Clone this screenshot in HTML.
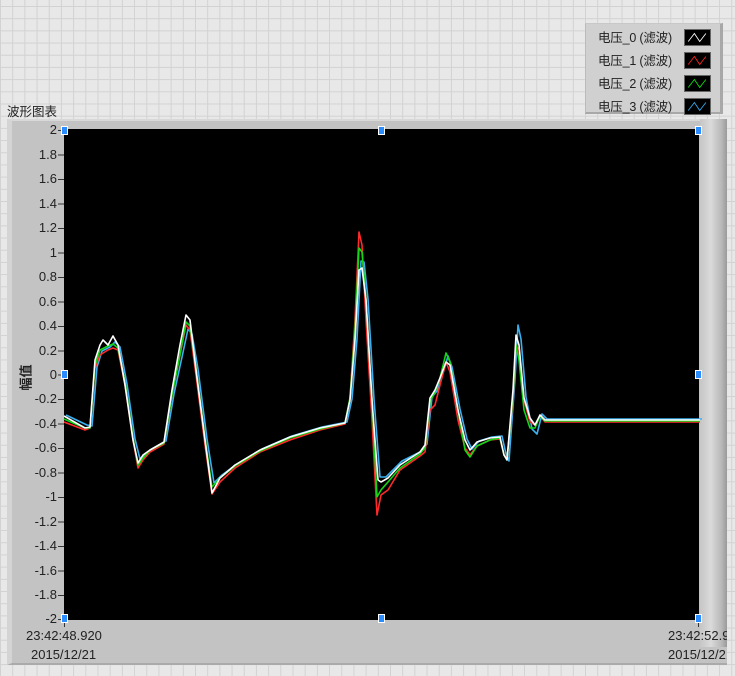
<!DOCTYPE html>
<html><head><meta charset="utf-8"><style>
*{margin:0;padding:0;box-sizing:border-box}
body{width:735px;height:676px;overflow:hidden;position:relative;font-family:"Liberation Sans","Noto Sans CJK SC",sans-serif;
background-color:#e8e8e8;
background-image:linear-gradient(#d2d2d2 1px,transparent 1px),linear-gradient(90deg,#d2d2d2 1px,transparent 1px);
background-size:12.2px 12.2px;background-position:0 6px}
.t{position:absolute;font-size:12px;color:#222;white-space:nowrap}
#legend{position:absolute;left:585px;top:23px;width:138px;height:91px;background:#d0d0d0;border-right:3px solid #a8a8a8;border-bottom:2px solid #a8a8a8;border-left:1px solid #bbb;border-top:1px solid #c8c8c8}
.li{position:absolute;left:12px;font-size:12.5px;color:#222;letter-spacing:-0.2px}
.sw{position:absolute;left:98px;width:27px;height:17px;background:#000;border:1px solid #666}
#panel{position:absolute;left:7px;top:119px;width:720px;height:546px;background:#c3c3c3;border-top:2px solid #d8d8d8;border-left:5px solid #d4d4d4;border-bottom:2px solid #aaa}
#rb{position:absolute;left:700px;top:119px;width:27px;height:528px;background:linear-gradient(90deg,#c6c6c6,#dadada 40%,#b8b8b8 80%,#9a9a9a)}
#plot{position:absolute;left:64px;top:129px;width:635px;height:491px;background:#000}
.yl{position:absolute;right:678px;font-size:13px;color:#222;text-align:right}
.h{position:absolute;width:7px;height:9px;background:#2a8cff;border:1px solid #fff}
</style></head><body>
<div id="legend">
<div class="li" style="top:3px">电压_0 (滤波)</div>
<div class="li" style="top:26px">电压_1 (滤波)</div>
<div class="li" style="top:49px">电压_2 (滤波)</div>
<div class="li" style="top:72px">电压_3 (滤波)</div>
<svg class="sw" style="top:5px" viewBox="0 0 27 17"><polyline points="3,13 10,4 16,13 23,4" fill="none" stroke="#fff"/></svg>
<svg class="sw" style="top:28px" viewBox="0 0 27 17"><polyline points="3,13 10,4 16,13 23,4" fill="none" stroke="#f22"/></svg>
<svg class="sw" style="top:51px" viewBox="0 0 27 17"><polyline points="3,13 10,4 16,13 23,4" fill="none" stroke="#1d1"/></svg>
<svg class="sw" style="top:74px" viewBox="0 0 27 17"><polyline points="3,13 10,4 16,13 23,4" fill="none" stroke="#3ae"/></svg>
</div>
<div class="t" style="left:7px;top:101px;font-size:12.5px">波形图表</div>
<div id="panel"></div>
<div id="rb"></div>
<div id="plot"></div>
<svg style="position:absolute;left:0;top:0" width="735" height="676">
<g stroke="#333" stroke-width="1">
<line x1="58" y1="130.5" x2="64" y2="130.5"/><line x1="58" y1="155" x2="64" y2="155"/><line x1="58" y1="179.5" x2="64" y2="179.5"/><line x1="58" y1="204" x2="64" y2="204"/><line x1="58" y1="228.5" x2="64" y2="228.5"/><line x1="58" y1="253" x2="64" y2="253"/><line x1="58" y1="277.5" x2="64" y2="277.5"/><line x1="58" y1="302" x2="64" y2="302"/><line x1="58" y1="326.5" x2="64" y2="326.5"/><line x1="58" y1="351" x2="64" y2="351"/><line x1="58" y1="375" x2="64" y2="375"/><line x1="58" y1="399.5" x2="64" y2="399.5"/><line x1="58" y1="424" x2="64" y2="424"/><line x1="58" y1="448.5" x2="64" y2="448.5"/><line x1="58" y1="473" x2="64" y2="473"/><line x1="58" y1="497.5" x2="64" y2="497.5"/><line x1="58" y1="522" x2="64" y2="522"/><line x1="58" y1="546.5" x2="64" y2="546.5"/><line x1="58" y1="571" x2="64" y2="571"/><line x1="58" y1="595.5" x2="64" y2="595.5"/><line x1="58" y1="619.5" x2="64" y2="619.5"/>
<line x1="64.5" y1="620" x2="64.5" y2="627"/><line x1="698.5" y1="620" x2="698.5" y2="627"/>
</g>
<g fill="none" stroke-width="1.6" stroke-linejoin="round">
<polyline stroke="#3ab0f0" transform="translate(2,-1)" points="64,416 85,426 90,427 95,368 100,352 108,348 113,343 118,348 125,385 133,440 138,460 143,455 150,450 164,442 172,395 180,358 186,330 190,335 196,370 205,440 212,484 220,476 235,465 260,450 290,437 320,428 345,423 350,400 355,340 359,262 362,263 366,300 372,400 378,478 384,478 390,472 400,462 420,452 425,445 430,398 435,392 440,378 446,357 450,368 458,410 465,440 470,450 477,442 490,438 500,437 504,455 507,462 513,380 516,326 519,340 524,398 530,430 535,435 540,415 545,420 555,420 700,420"/>
<polyline stroke="#ff2a2a" points="64,422 85,430 90,428 95,368 100,355 108,350 113,348 118,350 125,385 133,440 138,468 143,460 150,452 164,444 172,395 180,355 186,325 190,330 196,375 205,445 212,494 220,482 235,468 260,452 290,440 320,430 345,424 350,398 355,320 359,232 362,245 366,320 372,420 377,515 381,495 388,490 400,470 420,456 425,452 430,410 435,405 440,385 446,362 450,372 458,420 465,448 470,455 477,446 490,440 500,439 504,455 507,458 513,400 516,345 519,350 524,400 530,422 535,425 540,416 545,422 555,422 700,422"/>
<polyline stroke="#14d614" points="64,419 85,428 90,428 95,365 100,350 108,346 113,344 118,348 125,382 133,438 138,465 143,458 150,450 164,443 172,395 180,355 186,322 190,326 196,368 205,438 212,487 220,478 235,466 260,451 290,438 320,429 345,423 350,398 355,330 359,248 362,252 366,300 372,400 377,497 381,490 388,482 400,468 420,454 425,448 430,402 435,392 440,378 446,353 450,362 458,410 465,450 470,457 477,446 490,440 500,438 504,455 507,460 513,395 516,345 519,360 524,410 530,428 535,428 540,416 545,421 555,421 700,421"/>
<polyline stroke="#ffffff" points="64,416 85,428 90,427 95,360 100,345 103,340 108,345 113,336 118,345 125,385 133,440 138,463 143,455 150,450 164,442 172,390 180,345 186,315 190,320 196,370 205,440 212,493 220,478 235,465 260,450 290,437 320,428 345,423 350,400 355,340 359,270 362,268 366,300 372,400 378,480 381,482 388,478 400,465 420,452 425,445 430,398 435,390 440,378 446,362 450,365 458,410 465,440 470,450 477,442 490,438 500,437 504,455 507,460 513,390 516,335 519,345 524,398 530,418 535,425 540,415 545,420 555,420 700,420"/>
</g>
</svg>
<div class="yl" style="top:122px">2</div><div class="yl" style="top:147px">1.8</div><div class="yl" style="top:171px">1.6</div><div class="yl" style="top:196px">1.4</div><div class="yl" style="top:220px">1.2</div><div class="yl" style="top:245px">1</div><div class="yl" style="top:269px">0.8</div><div class="yl" style="top:294px">0.6</div><div class="yl" style="top:318px">0.4</div><div class="yl" style="top:343px">0.2</div><div class="yl" style="top:367px">0</div><div class="yl" style="top:391px">-0.2</div><div class="yl" style="top:416px">-0.4</div><div class="yl" style="top:440px">-0.6</div><div class="yl" style="top:465px">-0.8</div><div class="yl" style="top:489px">-1</div><div class="yl" style="top:514px">-1.2</div><div class="yl" style="top:538px">-1.4</div><div class="yl" style="top:563px">-1.6</div><div class="yl" style="top:587px">-1.8</div><div class="yl" style="top:611px">-2</div>
<div class="t" style="left:12px;top:368px;transform:rotate(-90deg);transform-origin:center;font-size:13px;font-weight:bold">幅值</div>
<div class="h" style="left:61px;top:126px"></div><div class="h" style="left:378px;top:126px"></div><div class="h" style="left:695px;top:126px"></div>
<div class="h" style="left:61px;top:370px"></div><div class="h" style="left:695px;top:370px"></div>
<div class="h" style="left:61px;top:614px"></div><div class="h" style="left:378px;top:614px"></div><div class="h" style="left:695px;top:614px"></div>
<div class="t" style="left:26px;top:628px;font-size:13px">23:42:48.920</div>
<div class="t" style="left:31px;top:647px;font-size:13px">2015/12/21</div>
<div class="t" style="left:668px;top:628px;width:59px;overflow:hidden;font-size:13px">23:42:52.920</div>
<div class="t" style="left:668px;top:647px;width:59px;overflow:hidden;font-size:13px">2015/12/21</div>
</body></html>
